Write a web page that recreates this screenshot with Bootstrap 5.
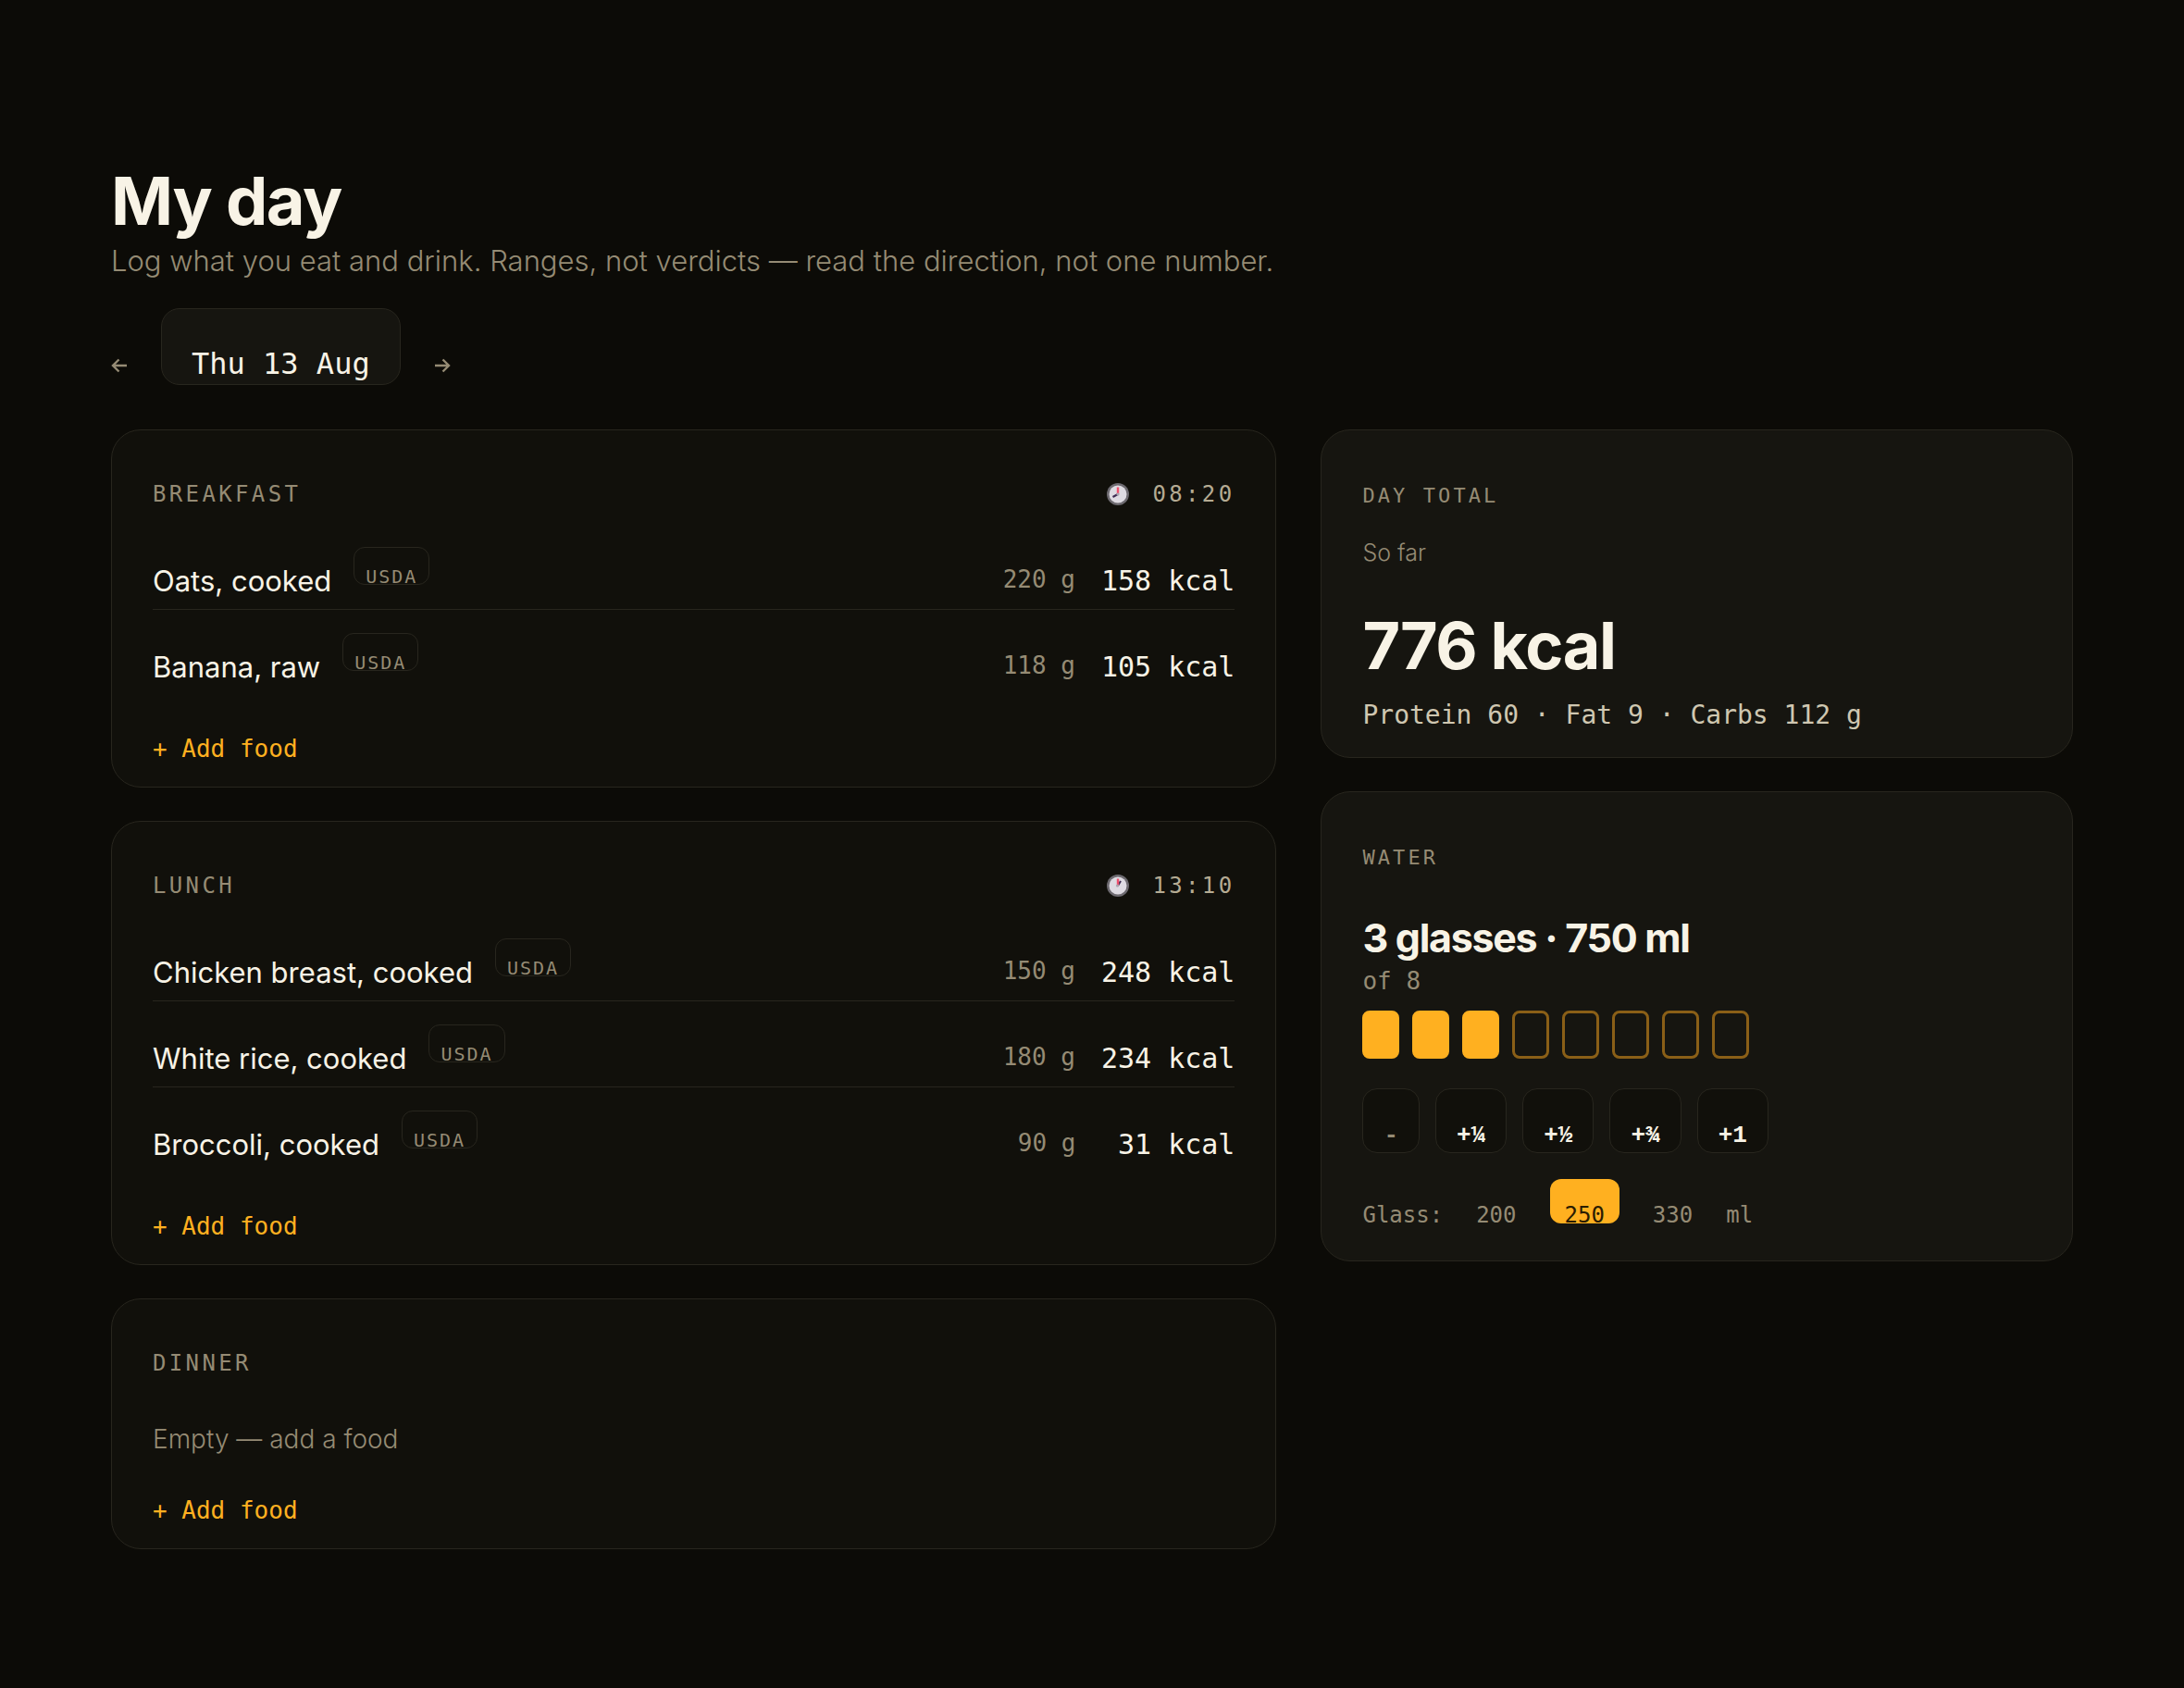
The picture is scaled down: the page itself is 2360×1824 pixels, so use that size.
<!DOCTYPE html>
<html lang="en" data-bs-theme="dark">
<head>
<meta charset="utf-8">
<meta name="viewport" content="width=device-width, initial-scale=1">
<title>My day</title>
<link href="https://cdn.jsdelivr.net/npm/bootstrap@5.3.0/dist/css/bootstrap.min.css" rel="stylesheet">
<style>
:root {
  --ink: #f8f3e6; --soft: #cfc7b1; --time: #b5ab93; --muted: #958b74;
  --amber: #ffb020; --line: #28261e; --page: #0c0b07; --panel: #11100b; --panel-high: #161510;
  --mono: "DejaVu Sans Mono", "Liberation Mono", monospace;
  --sans: Inter, "Liberation Sans", sans-serif;
}
body { background: var(--page); color: var(--ink); font-family: var(--sans); }
button { background: none; border: 0; padding: 0; color: inherit; }
.page { padding: 177px 120px 120px; }
.mono { font-family: var(--mono); }
.page-title { font-size: 72px; line-height: 80px; font-weight: 700; letter-spacing: -.02em; color: var(--ink); }
.page-note { font-size: 31px; line-height: 42px; font-weight: 300; color: var(--muted); }
.day-nav { gap: 36px; margin-top: 30px; }
.day-step { color: var(--muted); padding-bottom: 12px; line-height: 1; }
.day-step svg { display: block; }
.day-pick { background: var(--panel-high); border: 1px solid var(--line); border-radius: 20px; padding: 43px 32px 6px; font-size: 32px; line-height: 32px; }
.day-grid { display: grid; grid-template-columns: 1.55fr 1fr; column-gap: 48px; margin-top: 48px; align-items: start; }
.stack { gap: 36px; }
.panel { background: var(--panel); border: 1px solid var(--line); border-radius: 32px; padding: 53px 44px 25px; }
.panel-high { background: var(--panel-high); padding-top: 56px; padding-bottom: 27px; }
.panel-water { padding-bottom: 40px; }
.meal-head { font: 400 24px/32px var(--mono); letter-spacing: .14em; color: var(--muted); margin-bottom: 16px; }
.meal-head h2 { font: inherit; color: inherit; margin: 0; }
.meal-time { gap: 25px; color: var(--time); }
.food { padding: 25px 0 10px; border-bottom: 1px solid var(--line); }
.food:last-child { border-color: transparent; }
.food-name { font-size: 31px; line-height: 40px; }
.food-source { font: 20px/16px var(--mono); letter-spacing: .1em; color: var(--muted); border: 1px solid var(--line); border-radius: 12px; padding: 23px 12px 0; margin: 0 0 16px 24px; }
.food-grams { font: 26px/44px var(--mono); color: var(--muted); margin-right: 28px; }
.food-kcal { font: 30px/40px var(--mono); min-width: 144px; text-align: right; }
.empty-note { font-size: 28px; line-height: 40px; font-weight: 300; color: var(--muted); padding-top: 30px; }
.add-food { display: block; margin-top: 41px; font: 26px/32px var(--mono); color: var(--amber); }
.eyebrow { font: 22px/30px var(--mono); letter-spacing: .14em; color: var(--muted); margin: 0; }
.total-note { font-size: 25px; line-height: 32px; font-weight: 300; color: var(--muted); margin-top: 30px; }
.total-value { font-size: 70px; line-height: 80px; font-weight: 700; letter-spacing: -.02em; margin-top: 45px; }
.total-macros { font: 28px/36px var(--mono); color: var(--soft); margin-top: 17px; }
.water-value { font-size: 43px; line-height: 52px; font-weight: 700; letter-spacing: -.03em; margin-top: 45px; }
.water-goal { font: 26px/32px var(--mono); color: var(--muted); margin-top: 5px; }
.cups { gap: 14px; margin-top: 16px; }
.cup { width: 40px; height: 52px; border: 3px solid #8a5f17; border-radius: 8px; }
.cup-full { background: var(--amber); border-color: var(--amber); }
.pours { gap: 17px; margin-top: 32px; }
.pour { background: var(--panel); border: 1px solid var(--line); border-radius: 16px; padding: 35px 22px 3px; font: 700 26px/30px "Liberation Mono", monospace; }
.pour-less { color: var(--muted); }
.sizes { gap: 20px; margin-top: 28px; font: 24px/18px var(--mono); color: var(--muted); }
.size-opt { padding: 30px 16px 0; border-radius: 12px; }
.size-on { background: var(--amber); color: #2a1c02; }
@media (max-width: 1100px) {
  .page { padding: 48px 24px; }
  .day-grid { grid-template-columns: 1fr; row-gap: 36px; }
}
</style>
</head>
<body>
<main class="page">
  <header>
    <h1 class="page-title mb-1">My day</h1>
    <p class="page-note mb-0">Log what you eat and drink. Ranges, not verdicts — read the direction, not one number.</p>
    <nav class="day-nav d-flex align-items-end" aria-label="Day">
      <button type="button" class="day-step" aria-label="Previous day"><svg width="18" height="18" viewBox="0 0 18 18" fill="none" stroke="currentColor" stroke-width="2.4"><path d="M17 9H2M8.500 2.500 2 9l6.500 6.500"/></svg></button>
      <button type="button" class="day-pick mono">Thu 13 Aug</button>
      <button type="button" class="day-step" aria-label="Next day"><svg width="18" height="18" viewBox="0 0 18 18" fill="none" stroke="currentColor" stroke-width="2.4"><path d="M1 9h15M9.500 2.500 16 9l-6.500 6.500"/></svg></button>
    </nav>
  </header>

  <div class="day-grid">
    <div class="stack d-flex flex-column">
      <section class="panel">
        <div class="meal-head d-flex justify-content-between">
          <h2>BREAKFAST</h2>
          <div class="meal-time d-flex align-items-center">
            <svg width="24" height="24" viewBox="0 0 24 24" aria-hidden="true"><circle cx="12" cy="12" r="12" fill="#6d6a70"/><circle cx="12" cy="12" r="9.500" fill="#dedbe2"/><path d="M12 12V4.500" stroke="#f0506e" stroke-width="2.400"/><path d="m12 12-5.500 3" stroke="#3c2b52" stroke-width="2"/><circle cx="12" cy="12" r="1.600" fill="#aaa5b0"/></svg>
            <span>08:20</span>
          </div>
        </div>
        <ul class="list-unstyled mb-0">
          <li class="food d-flex align-items-end"><span class="food-name">Oats, cooked</span><span class="food-source">USDA</span><span class="food-grams ms-auto">220 g</span><span class="food-kcal">158 kcal</span></li>
          <li class="food d-flex align-items-end"><span class="food-name">Banana, raw</span><span class="food-source">USDA</span><span class="food-grams ms-auto">118 g</span><span class="food-kcal">105 kcal</span></li>
        </ul>
        <button type="button" class="add-food">+ Add food</button>
      </section>

      <section class="panel">
        <div class="meal-head d-flex justify-content-between">
          <h2>LUNCH</h2>
          <div class="meal-time d-flex align-items-center">
            <svg width="24" height="24" viewBox="0 0 24 24" aria-hidden="true"><circle cx="12" cy="12" r="12" fill="#6d6a70"/><circle cx="12" cy="12" r="9.500" fill="#dedbe2"/><path d="m12 12 3-5" stroke="#3c2b52" stroke-width="2"/><path d="M12 12V4.500" stroke="#f0506e" stroke-width="2.400"/><circle cx="11.500" cy="12" r="1.600" fill="#aaa5b0"/></svg>
            <span>13:10</span>
          </div>
        </div>
        <ul class="list-unstyled mb-0">
          <li class="food d-flex align-items-end"><span class="food-name">Chicken breast, cooked</span><span class="food-source">USDA</span><span class="food-grams ms-auto">150 g</span><span class="food-kcal">248 kcal</span></li>
          <li class="food d-flex align-items-end"><span class="food-name">White rice, cooked</span><span class="food-source">USDA</span><span class="food-grams ms-auto">180 g</span><span class="food-kcal">234 kcal</span></li>
          <li class="food d-flex align-items-end"><span class="food-name">Broccoli, cooked</span><span class="food-source">USDA</span><span class="food-grams ms-auto">90 g</span><span class="food-kcal">31 kcal</span></li>
        </ul>
        <button type="button" class="add-food">+ Add food</button>
      </section>

      <section class="panel">
        <div class="meal-head d-flex"><h2>DINNER</h2></div>
        <p class="empty-note mb-0">Empty — add a food</p>
        <button type="button" class="add-food">+ Add food</button>
      </section>
    </div>

    <div class="stack d-flex flex-column">
      <section class="panel panel-high">
        <h2 class="eyebrow">DAY TOTAL</h2>
        <p class="total-note mb-0">So far</p>
        <p class="total-value mb-0">776 kcal</p>
        <p class="total-macros mb-0">Protein 60 · Fat 9 · Carbs 112 g</p>
      </section>

      <section class="panel panel-high panel-water">
        <h2 class="eyebrow">WATER</h2>
        <p class="water-value mb-0">3 glasses · 750 ml</p>
        <p class="water-goal mb-0">of 8</p>
        <div class="cups d-flex flex-wrap" role="img" aria-label="3 of 8 glasses">
          <span class="cup cup-full"></span><span class="cup cup-full"></span><span class="cup cup-full"></span><span class="cup"></span><span class="cup"></span><span class="cup"></span><span class="cup"></span><span class="cup"></span>
        </div>
        <div class="pours d-flex flex-wrap">
          <button type="button" class="pour pour-less">-</button>
          <button type="button" class="pour">+¼</button>
          <button type="button" class="pour">+½</button>
          <button type="button" class="pour">+¾</button>
          <button type="button" class="pour">+1</button>
        </div>
        <div class="sizes d-flex flex-wrap align-items-end" role="group" aria-label="Glass size">
          <span>Glass:</span>
          <button type="button" class="size-opt">200</button>
          <button type="button" class="size-opt size-on" aria-pressed="true">250</button>
          <button type="button" class="size-opt">330</button>
          <span>ml</span>
        </div>
      </section>
    </div>
  </div>
</main>
<script src="https://cdn.jsdelivr.net/npm/bootstrap@5.3.0/dist/js/bootstrap.bundle.min.js"></script>
</body>
</html>
